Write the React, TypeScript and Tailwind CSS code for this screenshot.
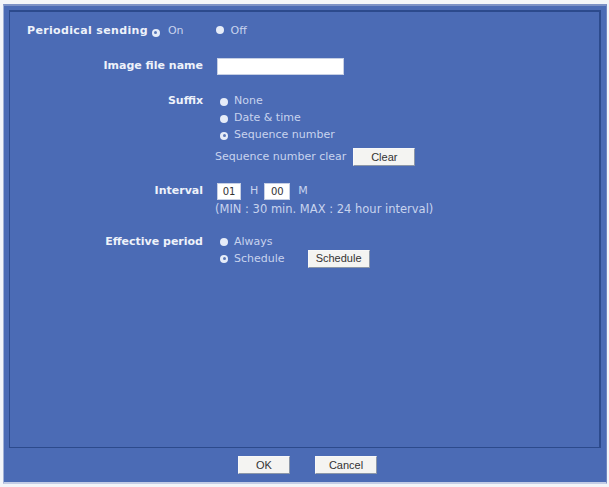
import { ReactNode } from 'react'

const Radio = ({ checked }: { checked?: boolean }) => (
  <span className="inline-flex items-center justify-center w-[8px] h-[8px] rounded-full bg-[#e6ecf8] shrink-0">
    {checked ? <span className="w-[3px] h-[3px] rounded-full bg-[#5a78b8]" /> : null}
  </span>
)

const Option = ({ checked, label, children }: { checked?: boolean; label: string; children?: ReactNode }) => (
  <div className="flex items-center h-[17px] pl-[3px]">
    <Radio checked={checked} />
    <span className="ml-[6px] text-[#c8d3ee]">{label}</span>
    {children}
  </div>
)

const Btn = ({ label, w }: { label: string; w: string }) => (
  <button
    className={`${w} h-[18px] bg-[#f4f4f2] border border-[#f8f8f8] border-r-[#8c97a8] border-b-[#8c97a8] text-[11px] text-[#333] leading-none font-['Liberation_Sans',sans-serif]`}
  >
    {label}
  </button>
)

const Label = ({ children }: { children: ReactNode }) => (
  <div className="w-[193px] shrink-0 text-right font-bold text-[#eef2fa]">{children}</div>
)

export default function App() {
  return (
    <div className="w-[609px] h-[487px] bg-[#f3f5f9] pt-[4px] pl-[3px] pr-[2px] font-['DejaVu_Sans',sans-serif] text-[11px]">
      <div className="h-[480px] bg-[#4b6bb5] border-t-2 border-t-[#7d92c6] border-l border-l-[#9fb0d6] border-r border-r-[#6f86c0] border-b-2 border-b-[#c3cde6] flex flex-col">
        <div className="mx-[5px] mt-[4px] h-[438px] border border-[#2c4a8c] border-t-2 border-r-2 flex flex-col">
          <div className="flex items-center h-[17px] mt-[11px] pl-[17px]">
            <span className="font-bold text-[#eef2fa] tracking-[0.35px]">Periodical sending</span>
            <span className="ml-[4px]"><Radio checked /></span>
            <span className="ml-[8px] text-[#c8d3ee]">On</span>
            <span className="ml-[32px]"><Radio /></span>
            <span className="ml-[7px] text-[#c8d3ee]">Off</span>
          </div>

          <div className="flex items-center mt-[18px]">
            <Label>Image file name</Label>
            <div className="ml-[14px] w-[127px] h-[17px] bg-white border border-[#c6cfe4]" />
          </div>

          <div className="flex mt-[18px]">
            <div className="h-[17px] flex items-center"><Label>Suffix</Label></div>
            <div className="ml-[14px] flex flex-col">
              <Option label="None" />
              <Option label="Date & time" />
              <Option checked label="Sequence number" />
              <div className="flex items-center mt-[4px] -ml-[2px]">
                <span className="text-[#c8d3ee]">Sequence number clear</span>
                <span className="ml-[7px]"><Btn label="Clear" w="w-[62px]" /></span>
              </div>
            </div>
          </div>

          <div className="flex mt-[16px]">
            <div className="h-[18px] flex items-center"><Label>Interval</Label></div>
            <div className="ml-[14px] flex flex-col">
              <div className="flex items-center h-[18px]">
                <div className="w-[24px] h-[17px] bg-white border border-[#c6cfe4] text-[10px] text-[#333] flex items-center justify-center">01</div>
                <span className="ml-[9px] text-[#c8d3ee]">H</span>
                <div className="ml-[6px] w-[26px] h-[17px] bg-white border border-[#c6cfe4] text-[10px] text-[#333] flex items-center justify-center">00</div>
                <span className="ml-[8px] text-[#c8d3ee]">M</span>
              </div>
              <div className="mt-[1px] -ml-[2px] text-[#c8d3ee] text-[11.5px]">(MIN : 30 min. MAX : 24 hour interval)</div>
            </div>
          </div>

          <div className="flex mt-[15px]">
            <div className="h-[17px] flex items-center"><Label>Effective period</Label></div>
            <div className="ml-[14px] flex flex-col">
              <Option label="Always" />
              <Option checked label="Schedule">
                <span className="ml-[23px]"><Btn label="Schedule" w="w-[62px]" /></span>
              </Option>
            </div>
          </div>
        </div>

        <div className="flex-1 flex items-center justify-center gap-[25px] pl-[5px]">
          <Btn label="OK" w="w-[52px]" />
          <Btn label="Cancel" w="w-[62px]" />
        </div>
      </div>
    </div>
  )
}
